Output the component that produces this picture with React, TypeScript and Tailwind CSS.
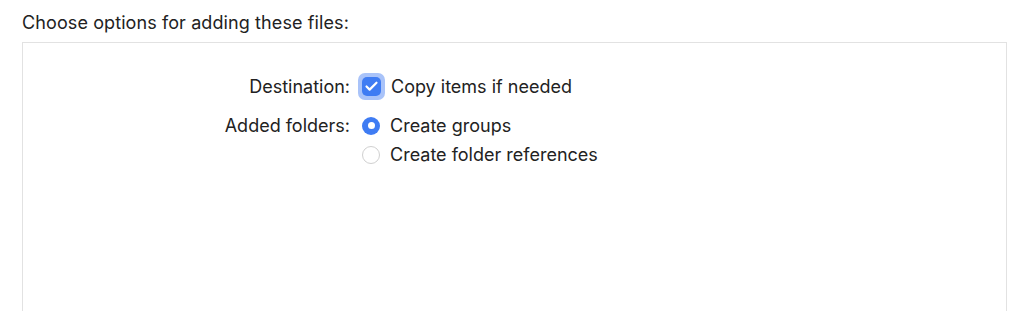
import { Check } from 'lucide-react';

const App = () => {
  return (
    <div
      className="w-[1024px] h-[311px] overflow-hidden bg-white text-[#222222]"
      style={{ fontFamily: 'Inter, "Liberation Sans", sans-serif' }}
    >
      <div className="pl-[22px] pt-[10px] text-[18px] leading-[25px] tracking-[0.1px]">
        Choose options for adding these files:
      </div>
      <div className="ml-[22px] mt-[7px] w-[985px] h-[300px] border border-[#e2e2e2] bg-white">
        <div className="grid grid-cols-[327px_1fr] gap-x-[8px] pt-[30px] text-[18px]">
          <div className="text-right leading-[27px] h-[27px]">Destination:</div>
          <div className="flex items-center gap-[6px] h-[27px]">
            <div className="w-[27px] h-[27px] rounded-[7px] bg-[#a9c3f9] flex items-center justify-center">
              <div className="w-[19px] h-[19px] rounded-[5px] bg-[#3f7cf3] flex items-center justify-center">
                <Check className="w-[15px] h-[15px] text-white" strokeWidth={3.5} />
              </div>
            </div>
            <span>Copy items if needed</span>
          </div>

          <div className="text-right leading-[27px] mt-[12px]">Added folders:</div>
          <div className="flex flex-col mt-[12px]">
            <div className="flex items-center gap-[10px] h-[27px] pl-[4px]">
              <div className="w-[18px] h-[18px] rounded-full bg-[#3f7cf3] flex items-center justify-center">
                <div className="w-[7px] h-[7px] rounded-full bg-white" />
              </div>
              <span>Create groups</span>
            </div>
            <div className="flex items-center gap-[10px] h-[27px] mt-[2px] pl-[4px]">
              <div className="w-[18px] h-[18px] rounded-full border border-[#d0d0d0] bg-white" />
              <span>Create folder references</span>
            </div>
          </div>
        </div>
      </div>
    </div>
  );
};

export default App;
